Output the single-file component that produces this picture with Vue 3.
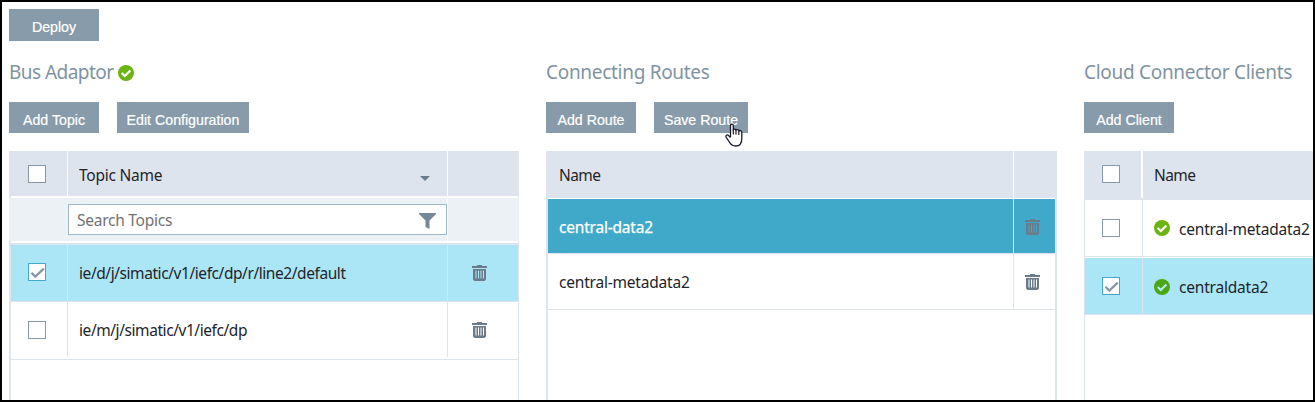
<script setup>
import { h } from 'vue'

const topics = [
  { name: 'ie/d/j/simatic/v1/iefc/dp/r/line2/default', checked: true },
  { name: 'ie/m/j/simatic/v1/iefc/dp', checked: false },
]
const routes = [
  { name: 'central-data2', active: true },
  { name: 'central-metadata2', active: false },
]
const clients = [
  { name: 'central-metadata2', checked: false },
  { name: 'centraldata2', checked: true },
]

const Check = (props) =>
  h('span', { class: ['check', { on: props.on }] }, props.on
    ? [h('svg', { width: 16, height: 16, viewBox: '0 0 16 16' }, [
        h('path', { d: 'M2.500 8.800 6.300 12.600 14.800 4.600', fill: 'none', stroke: '#8497a9', 'stroke-width': 2.2 }),
      ])]
    : [])
Check.props = ['on']

const Ok = (props) =>
  h('svg', { class: 'ok', width: 16, height: 16, viewBox: '0 0 16 16' }, [
    h('circle', { cx: 8, cy: 8, r: 8, fill: props.dark ? '#4ba614' : '#6cb414' }),
    h('path', { d: 'M3.7 8 6.800 11 12.400 5.400', fill: 'none', stroke: props.dark ? '#b4ecf5' : '#fff', 'stroke-width': 2.1 }),
  ])
Ok.props = ['dark']

const Trash = () =>
  h('svg', { class: 'trash', width: 15, height: 16, viewBox: '0 0 15 16' }, [
    h('path', {
      d: 'M0 1h5V0h5v1h5v2H0zM1 4h13v10.500L12.500 16h-10L1 14.500zM3.500 5.500v8h1v-8zM6 5.500v8h1v-8zM8.500 5.500v8h1v-8zM11 5.500v8h1v-8z',
      fill: 'currentColor', 'fill-rule': 'evenodd',
    }),
  ])
</script>

<template>
  <main class="screen">
    <div class="toolbar"><button class="btn deploy">Deploy</button></div>
    <div class="columns">
      <section class="col bus">
        <h2><span class="h-bus">Bus Adaptor</span><Ok /></h2>
        <div class="actions">
          <button class="btn">Add Topic</button>
          <button class="btn edit">Edit Configuration</button>
        </div>
        <div class="table">
          <div class="row head">
            <div class="cell"><Check /></div>
            <div class="cell name">
              <span>Topic Name</span>
              <svg class="caret" width="10" height="5" viewBox="0 0 10 5"><path d="M0 0h10L5 5z" fill="#6b7d8c" /></svg>
            </div>
            <div class="cell"></div>
          </div>
          <div class="row filter">
            <div class="cell"></div>
            <div class="cell search">
              <div class="box">
                <span>Search Topics</span>
                <svg width="17" height="16" viewBox="0 0 17 16"><path d="M0 0h17v1L10.500 7.500V16L6.500 14V7.500L0 1z" fill="#758899" /></svg>
              </div>
            </div>
            <div class="cell"></div>
          </div>
          <div class="body">
            <div v-for="t in topics" :key="t.name" class="row" :class="{ selected: t.checked }">
              <div class="cell"><Check :on="t.checked" /></div>
              <div class="cell name"><span class="path">{{ t.name }}</span></div>
              <div class="cell"><Trash /></div>
            </div>
          </div>
        </div>
      </section>

      <section class="col routes">
        <h2><span>Connecting Routes</span></h2>
        <div class="actions">
          <button class="btn">Add Route</button>
          <button class="btn save">
            Save Route
            <svg class="pointer" width="18" height="24" viewBox="0 0 18 24">
              <path
                d="M5.500 14V2.700C5.500.500 8.300.500 8.300 2.700V7.200C8.500 5.600 11 5.800 11 7.400 11.300 6.200 13.800 6.400 13.800 8.200 14.300 7 16.800 7.400 16.800 9.500V15.500C16.800 20 14.500 23 10.700 23 7 23 5.600 21.500 4 18.500L1.200 14.300C.200 12.300 2.300 11.300 3.500 12.500L5.500 14.500"
                fill="#fff" stroke="#1b1c2b" stroke-width="1.300" stroke-linejoin="round"
              />
              <path d="M8.300 6.500v5M11 7v4.500M13.800 8v4" stroke="#1b1c2b" stroke-width="1.200" />
            </svg>
          </button>
        </div>
        <div class="table">
          <div class="row head">
            <div class="cell name"><span class="title">Name</span></div>
            <div class="cell"></div>
          </div>
          <div v-for="r in routes" :key="r.name" class="row" :class="{ active: r.active }">
            <div class="cell name"><span class="label">{{ r.name }}</span></div>
            <div class="cell"><Trash /></div>
          </div>
        </div>
      </section>

      <section class="col clients">
        <h2><span>Cloud Connector Clients</span></h2>
        <div class="actions"><button class="btn">Add Client</button></div>
        <div class="table">
          <div class="row head">
            <div class="cell"><Check /></div>
            <div class="cell name"><span class="title">Name</span></div>
          </div>
          <div v-for="c in clients" :key="c.name" class="row" :class="{ selected: c.checked }">
            <div class="cell"><Check :on="c.checked" /></div>
            <div class="cell name"><Ok :dark="c.checked" /><span class="label">{{ c.name }}</span></div>
          </div>
        </div>
      </section>
    </div>
  </main>
</template>

<style>
body { background: #fff; }
.check {
  display: block; flex: none; box-sizing: border-box; width: 18px; height: 18px;
  border: 1px solid #8598ac; background: #fff;
}
.check.on { border-color: #40a9c9; }
.check svg, .ok, .trash { display: block; flex: none; }
.trash { color: #6b7b89; }
</style>

<style scoped>
.screen {
  box-sizing: border-box; width: 1315px; height: 402px; border: 2px solid #000;
  padding: 7px 0 0 7px; overflow: hidden; background: #fff; color: #1f2429;
  font: 15.5px/20px "Noto Sans", sans-serif; letter-spacing: -0.25px;
  display: flex; flex-direction: column;
}
.toolbar { height: 32px; flex: none; }
.btn {
  position: relative; box-sizing: border-box; border: 0; padding: 4px 0 0; margin: 0;
  width: 90px; height: 31px; flex: none;
  background: #889baa; color: #fff; white-space: nowrap; text-align: center;
  font: 14.2px/20px "Liberation Sans", Arial, sans-serif; letter-spacing: 0;
  -webkit-text-stroke: 0.2px #fff;
}
.deploy { height: 32px; }
.edit { width: 132px; }
.save { width: 94px; }
.columns { flex: 1; min-height: 0; display: flex; gap: 27px; }
.col { flex: none; display: flex; flex-direction: column; min-height: 0; }
.bus { width: 510px; }
.routes { width: 511px; }
.clients { width: 260px; }
h2 {
  margin: 0; height: 61px; box-sizing: border-box; padding-top: 17px; flex: none;
  display: flex; gap: 5px; white-space: nowrap;
  font-size: 19px; line-height: 28px; font-weight: 400; color: #8093a3; letter-spacing: -0.3px;
}
.h-bus { letter-spacing: -0.55px; }
h2 .ok { margin-top: 7px; }
.actions { display: flex; gap: 18px; height: 49px; flex: none; }
.table { flex: 1; min-height: 0; box-sizing: border-box; white-space: nowrap; }
.row { display: grid; box-sizing: border-box; }
.cell { display: flex; align-items: center; justify-content: center; box-sizing: border-box; min-width: 0; }
.cell.name { justify-content: flex-start; }
.title { letter-spacing: -0.6px; }
.label { letter-spacing: -0.2px; }
.path { letter-spacing: -0.43px; }

.bus .table { border: solid #dde4ed; border-width: 0 1px 0 2px; }
.bus .row { grid-template-columns: 57px 380px 1fr; }
.bus .head, .bus .filter { margin: 0 -1px 2px -2px; grid-template-columns: 59px 380px 1fr; }
.bus .head { height: 45px; background: #dee4ed; }
.bus .filter { height: 43px; background: #ebf1f5; }
.bus .head .cell + .cell { border-left: 1px solid #fff; margin-left: -1px; }
.bus .head .cell:first-child, .bus .body .cell:first-child { justify-content: flex-start; }
.bus .head .cell:first-child { padding-left: 19px; }
.bus .body .cell:first-child { padding: 0 0 2px 17px; }
.bus .body .row + .row .cell:first-child { padding-bottom: 0; }
.bus .name { padding: 3px 18px 0 11px; justify-content: space-between; }
.caret { margin-top: 7px; }
.search { padding: 0; border-right: 1px solid #f8fafb; }
.box {
  box-sizing: border-box; width: 379px; height: 31px; border: 1px solid #9fbac9; background: #fff;
  display: flex; align-items: center; justify-content: space-between; padding: 2px 10px 0 8px; color: #727272;
}
.box span { margin-top: -2px; }
.body { border-top: 2px solid #dde4ed; margin: 0 -1px 0 0; }
.body .row { height: 57px; border-bottom: 1px solid #dde4ed; }
.body .row + .row { height: 58px; }
.body .cell + .cell { border-left: 1px solid #dde4ed; margin-left: -1px; }
.body .row + .row .cell { margin-bottom: 2px; }
.bus .body .row .name { padding: 0 0 0 11px; }
.bus .body .row + .row .name { padding-top: 1px; }
.bus .row.selected { border-right: 1px solid #dde4ed; }
.body .cell:last-child { padding-right: 9px; }
.body .selected .cell:last-child { padding-right: 8px; }
.selected { background: #abe6f6; }

.routes .table { border: solid #dde4ed; border-width: 0 2px; }
.routes .row { grid-template-columns: 465px 1fr; height: 56px; border-bottom: 1px solid #dde4ed; }
.routes .row .cell + .cell { border-left: 1px solid #dde4ed; padding-right: 4px; }
.routes .head { height: 48px; background: #dee4ed; border-bottom: 1px solid #fff; }
.routes .head .cell + .cell { border-left-color: #fff; }
.routes .active { height: 55px; background: #40a9c9; color: #fff; }
.routes .active .cell { padding-top: 2px; }
.routes .active .label { -webkit-text-stroke: 0.25px #fff; }
.routes .name { padding-left: 11px; }

.clients .table { border-left: 1px solid #dde4ed; }
.clients .row { grid-template-columns: 57px 1fr; height: 57px; border-bottom: 1px solid #dde4ed; }
.clients .row .cell:first-child { justify-content: flex-start; padding-left: 17px; }
.clients .row .cell + .cell { border-left: 1px solid #dde4ed; padding-left: 11px; gap: 9px; }
.clients .label { padding-top: 2px; }
.clients .head { height: 49px; background: #dee4ed; border: 0; grid-template-columns: 56px 1fr; }
.clients .head .cell { margin-bottom: 2px; }
.clients .head .cell:first-child { padding-bottom: 1px; }
.clients .head .cell + .cell { border-left: 2px solid #fff; padding-top: 1px; }
.clients .selected { margin-top: 1px; }
.clients .selected .name { padding-top: 1px; }
.clients .selected .label { padding-top: 0; }
.pointer { position: absolute; left: 71px; top: 21px; z-index: 2; }
</style>
